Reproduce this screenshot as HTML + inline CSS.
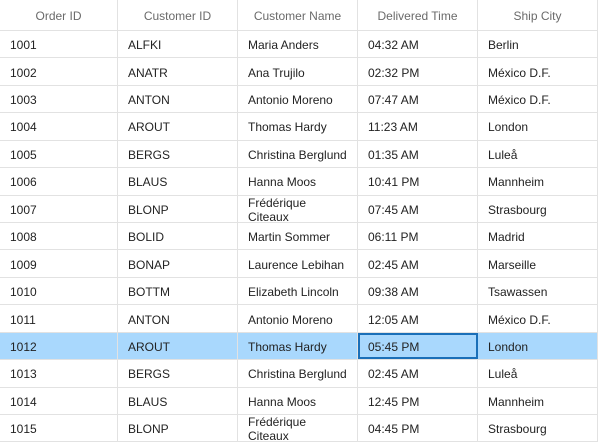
<html><head><style>
body{margin:0;width:602px;height:446px;background:#fff;font-family:"Liberation Sans",sans-serif;font-size:12px;color:#222;position:relative;overflow:hidden}
.h{position:absolute;top:0;height:31px;line-height:33px;text-align:center;color:#6a6a6a;border-right:1px solid #e2e2e2;border-bottom:1px solid #e2e2e2;box-sizing:border-box}
.r{position:absolute;left:0;width:598px;height:27.43px;border-bottom:1px solid #e2e2e2;box-sizing:border-box}
.c{position:absolute;top:0;height:100%;border-right:1px solid #e2e2e2;box-sizing:border-box;padding-left:10px;padding-top:2px;display:flex;align-items:center;line-height:14px}
.sel{background:#a9d8fd}
.cur{outline:2px solid #1a6fb8;outline-offset:-2px}
</style></head><body>
<div class="h" style="left:0;width:118px">Order ID</div>
<div class="h" style="left:118px;width:120px">Customer ID</div>
<div class="h" style="left:238px;width:120px">Customer Name</div>
<div class="h" style="left:358px;width:120px">Delivered Time</div>
<div class="h" style="left:478px;width:120px">Ship City</div>
<div id="rows"></div>
<script>
var d=[["1001","ALFKI","Maria Anders","04:32 AM","Berlin"],["1002","ANATR","Ana Trujilo","02:32 PM","México D.F."],["1003","ANTON","Antonio Moreno","07:47 AM","México D.F."],["1004","AROUT","Thomas Hardy","11:23 AM","London"],["1005","BERGS","Christina Berglund","01:35 AM","Luleå"],["1006","BLAUS","Hanna Moos","10:41 PM","Mannheim"],["1007","BLONP","Frédérique<br>Citeaux","07:45 AM","Strasbourg"],["1008","BOLID","Martin Sommer","06:11 PM","Madrid"],["1009","BONAP","Laurence Lebihan","02:45 AM","Marseille"],["1010","BOTTM","Elizabeth Lincoln","09:38 AM","Tsawassen"],["1011","ANTON","Antonio Moreno","12:05 AM","México D.F."],["1012","AROUT","Thomas Hardy","05:45 PM","London"],["1013","BERGS","Christina Berglund","02:45 AM","Luleå"],["1014","BLAUS","Hanna Moos","12:45 PM","Mannheim"],["1015","BLONP","Frédérique<br>Citeaux","04:45 PM","Strasbourg"]];
var L=[0,118,238,358,478],W=[118,120,120,120,120],h="";
d.forEach(function(r,i){var s=i==11;h+='<div class="r'+(s?' sel':'')+'" style="top:'+(31+i*27.43)+'px">';r.forEach(function(t,j){h+='<div class="c'+(s&&j==3?' cur':'')+'" style="left:'+L[j]+'px;width:'+W[j]+'px">'+t+'</div>'});h+='</div>'});
document.getElementById('rows').innerHTML=h;
</script>
</body></html>
